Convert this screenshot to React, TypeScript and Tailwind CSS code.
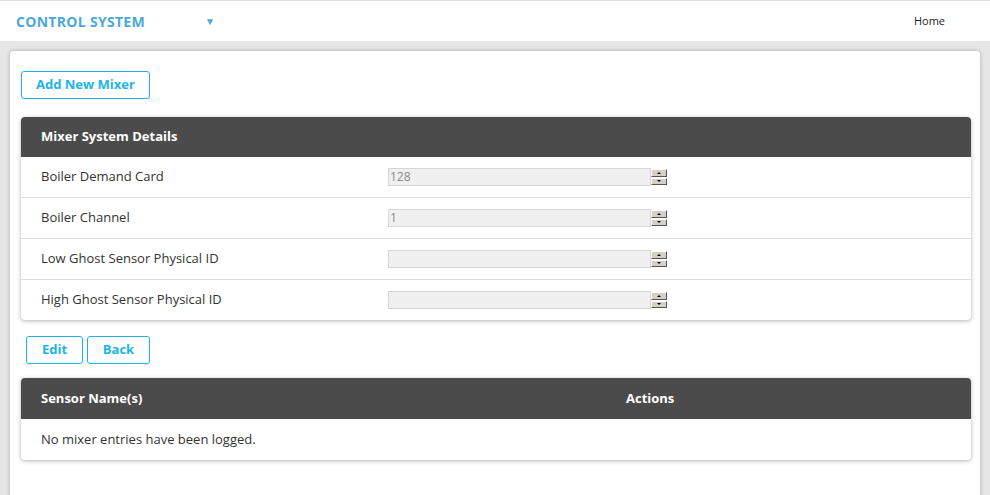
import React from "react";

const font = { fontFamily: '"Open Sans", "Liberation Sans", sans-serif' };

function SpinInput({ value }: { value?: string }) {
    return (
        <div className="flex items-center">
            <div className="w-[263px] h-[18px] bg-[#f0f0f0] border border-[#d6d6d6] text-[12px] leading-[16px] text-[#8a8a8a] px-[1px]">
                {value}
            </div>
            <div className="w-[18px] h-[18px] ml-[-1px] flex flex-col gap-[1px] p-[1px]">
                <div className="flex-1 bg-[#d4d0c8] border-r border-b border-[#555] border-t-white border-l-white border-t border-l flex items-center justify-center">
                    <div className="w-0 h-0 border-l-[2px] border-r-[2px] border-b-[2px] border-l-transparent border-r-transparent border-b-black" />
                </div>
                <div className="flex-1 bg-[#d4d0c8] border-r border-b border-[#555] border-t-white border-l-white border-t border-l flex items-center justify-center">
                    <div className="w-0 h-0 border-l-[2px] border-r-[2px] border-t-[2px] border-l-transparent border-r-transparent border-t-black" />
                </div>
            </div>
        </div>
    );
}

const rows = [
    { label: "Boiler Demand Card", value: "128" },
    { label: "Boiler Channel", value: "1" },
    { label: "Low Ghost Sensor Physical ID", value: "" },
    { label: "High Ghost Sensor Physical ID", value: "" },
];

export default function App() {
    return (
        <div className="w-[990px] h-[495px] overflow-hidden bg-[#e6e6e6] text-[13px] text-[#333]" style={font}>
            {/* Top bar */}
            <div className="h-[41px] bg-white border-t border-[#e0e0e0] flex items-center pl-[16px] pr-[45px]">
                <span className="text-[14px] font-bold text-[#4aa9d6] tracking-[0.3px]">CONTROL SYSTEM</span>
                <span className="ml-[60px] text-[#4aa9d6] text-[10px] mt-[1px]">▼</span>
                <span className="ml-auto text-[11px] text-[#222]">Home</span>
            </div>

            {/* Content card */}
            <div className="mt-[10px] ml-[10px] w-[970px] h-[460px] bg-white rounded-[4px] shadow-[0_0_4px_rgba(0,0,0,0.25)] px-[11px] pt-[20px]">
                <button className="h-[28px] px-[14px] border border-[#1cb4e8] rounded-[3px] text-[#1cb4e8] font-bold text-[13px]">
                    Add New Mixer
                </button>

                <div className="mt-[18px] w-[950px] rounded-[4px] shadow-[0_1px_4px_rgba(0,0,0,0.3)] overflow-hidden">
                    <div className="h-[40px] bg-[#4b4b4b] text-white font-bold flex items-center px-[20px]">
                        Mixer System Details
                    </div>
                    {rows.map((r, i) => (
                        <div
                            key={r.label}
                            className={`flex items-center px-[20px] ${i > 0 ? "h-[41px] border-t border-[#dcdcdc]" : "h-[40px]"}`}
                        >
                            <span className="w-[347px]">{r.label}</span>
                            <SpinInput value={r.value} />
                        </div>
                    ))}
                </div>

                <div className="mt-[16px] ml-[5px] flex gap-[4px]">
                    <button className="h-[28px] w-[57px] border border-[#1cb4e8] rounded-[3px] text-[#1cb4e8] font-bold text-[13px]">
                        Edit
                    </button>
                    <button className="h-[28px] w-[63px] border border-[#1cb4e8] rounded-[3px] text-[#1cb4e8] font-bold text-[13px]">
                        Back
                    </button>
                </div>

                <div className="mt-[14px] w-[950px] rounded-[4px] shadow-[0_1px_4px_rgba(0,0,0,0.3)] overflow-hidden">
                    <div className="h-[41px] bg-[#4b4b4b] text-white font-bold flex items-center px-[20px]">
                        <span className="w-[585px]">Sensor Name(s)</span>
                        <span>Actions</span>
                    </div>
                    <div className="h-[41px] flex items-center px-[20px]">No mixer entries have been logged.</div>
                </div>
            </div>
        </div>
    );
}
